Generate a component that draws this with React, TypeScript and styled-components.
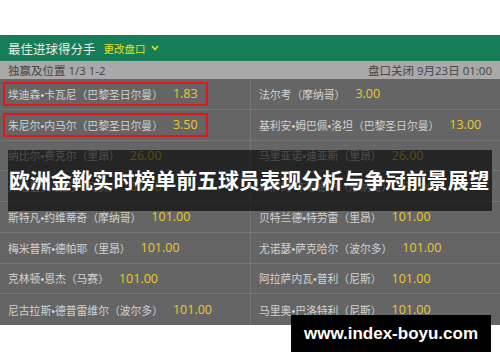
import React from "react";
import styled, { createGlobalStyle } from "styled-components";

const Global = createGlobalStyle`
  html, body { margin: 0; padding: 0; background: #ffffff; }
  body { font-family: "Noto Sans CJK SC", "Noto Sans", sans-serif; }
`;

const Page = styled.div`
  width: 500px;
  height: 362px;
  padding-top: 35px;
  box-sizing: border-box;
  position: relative;
  overflow: hidden;
`;

const Header = styled.div`
  height: 26px;
  background: #177d58;
  display: flex;
  align-items: center;
  padding-left: 8px;
  gap: 8px;
`;

const Title = styled.span`
  color: #e6efe9;
  font-size: 12.5px;
`;

const Change = styled.span`
  color: #e3e21a;
  font-size: 10.5px;
  display: flex;
  align-items: center;
  gap: 5px;
`;

const SubBar = styled.div`
  height: 18px;
  background: #a9a9a9;
  display: flex;
  align-items: center;
  justify-content: space-between;
  padding: 0 8px;
  color: #454545;
  font-family: "Open Sans", "Noto Sans CJK SC", sans-serif;
  font-size: 11.5px;
`;

const Table = styled.div`
  position: relative;
  background: #656565;
  display: grid;
  grid-template-columns: 250px 250px;
  grid-auto-rows: 30.75px;
`;

const Cell = styled.div<{ $right?: boolean; $last?: boolean }>`
  display: flex;
  align-items: center;
  padding: 3px;
  box-sizing: border-box;
  border-bottom: ${(p) => (p.$last ? "none" : "1px solid #767676")};
  border-left: ${(p) => (p.$right ? "1px solid #767676" : "none")};
  padding-left: ${(p) => (p.$right ? "8px" : "3px")};
`;

const Pick = styled.div<{ $hl?: boolean }>`
  display: flex;
  align-items: center;
  height: 100%;
  box-sizing: border-box;
  width: ${(p) => (p.$hl ? "205px" : "auto")};
  border: 2px solid ${(p) => (p.$hl ? "#e8141a" : "transparent")};
  padding-left: 3px;
`;

const Name = styled.span`
  color: #d2d2d2;
  font-family: "Liberation Sans", "Noto Sans CJK SC", sans-serif;
  font-size: 10.8px;
  white-space: nowrap;
`;

const Odds = styled.span`
  color: #ecc92a;
  font-family: "Open Sans", "Noto Sans", sans-serif;
  font-size: 12.5px;
  margin-left: 10px;
  white-space: nowrap;
`;

const Banner = styled.div`
  position: absolute;
  left: 8px;
  top: 71px;
  width: 484px;
  height: 61px;
  background: rgba(0, 0, 0, 0.63);
  display: flex;
  align-items: center;
  padding-left: 1px;
  box-sizing: border-box;
`;

const BannerText = styled.span`
  color: #ffffff;
  font-size: 20.9px;
  font-weight: 700;
  white-space: nowrap;
  margin-top: -4px;
`;

const Watermark = styled.div`
  position: absolute;
  left: 291px;
  top: 315px;
  width: 200px;
  height: 37px;
  background: #000000;
  display: flex;
  align-items: center;
  justify-content: center;
`;

const WaterText = styled.span`
  color: #ffffff;
  font-family: "Liberation Sans", Arial, sans-serif;
  font-weight: 700;
  font-size: 17px;
  white-space: nowrap;
`;

const rows: [string, string, string, string][] = [
  ["埃迪森•卡瓦尼（巴黎圣日尔曼）", "1.83", "法尔考（摩纳哥）", "3.00"],
  ["朱尼尔•内马尔（巴黎圣日尔曼）", "3.50", "基利安•姆巴佩•洛坦（巴黎圣日尔曼）", "13.00"],
  ["纳比尔•费克尔（里昂）", "26.00", "马里亚诺•迪亚斯（里昂）", "26.00"],
  ["弗洛里安•索万（马赛）", "51.00", "维萨姆•本耶德尔（摩纳哥）", "51.00"],
  ["斯特凡•约维蒂奇（摩纳哥）", "101.00", "贝特兰德•特劳雷（里昂）", "101.00"],
  ["梅米普斯•德帕耶（里昂）", "101.00", "尤诺瑟•萨克哈尔（波尔多）", "101.00"],
  ["克林顿•恩杰（马赛）", "101.00", "阿拉萨内瓦•普利（尼斯）", "101.00"],
  ["尼古拉斯•德普雷维尔（波尔多）", "101.00", "马里奥•巴洛特利（尼斯）", "101.00"],
];

export default function App() {
  return (
    <>
      <Global />
      <Page>
        <Header>
          <Title>最佳进球得分手</Title>
          <Change>
            更改盘口
            <svg width="8" height="6" viewBox="0 0 8 6">
              <polyline points="1,1 4,4.5 7,1" fill="none" stroke="#e3e21a" strokeWidth="1.6" />
            </svg>
          </Change>
        </Header>
        <SubBar>
          <span>独赢及位置 1/3 1-2</span>
          <span>盘口关闭 9月23日 01:00</span>
        </SubBar>
        <Table>
          {rows.map((r, i) => (
            <React.Fragment key={i}>
              <Cell $last={i === rows.length - 1}>
                <Pick $hl={i < 2}>
                  <Name>{r[0]}</Name>
                  <Odds>{r[1]}</Odds>
                </Pick>
              </Cell>
              <Cell $right $last={i === rows.length - 1}>
                <Name>{r[2]}</Name>
                <Odds>{r[3]}</Odds>
              </Cell>
            </React.Fragment>
          ))}
          <Banner>
            <BannerText>欧洲金靴实时榜单前五球员表现分析与争冠前景展望</BannerText>
          </Banner>
        </Table>
        <Watermark>
          <WaterText>www.index-boyu.com</WaterText>
        </Watermark>
      </Page>
    </>
  );
}
